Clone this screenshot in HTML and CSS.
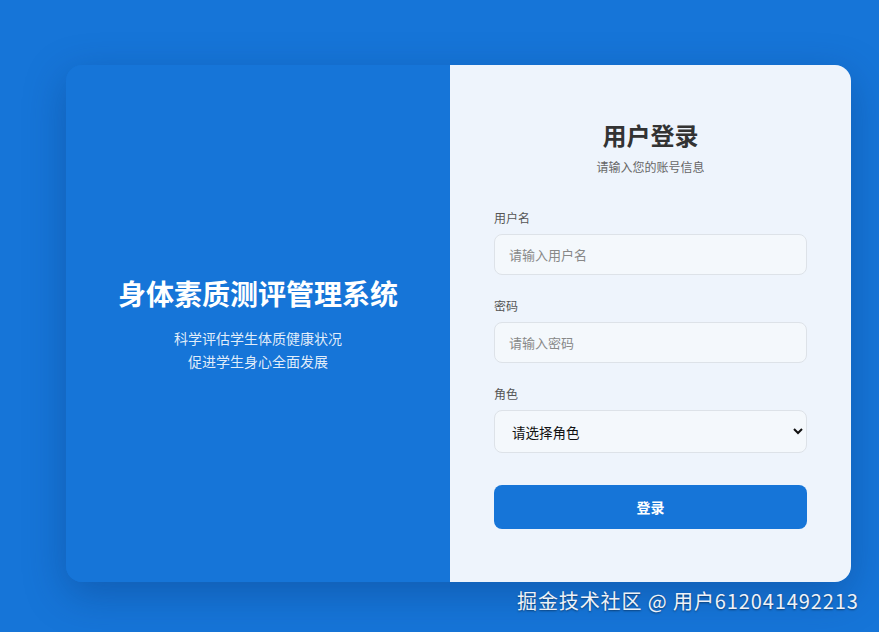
FILE: index.html
```html
<!DOCTYPE html>
<html lang="zh-CN">
<head>
    <meta charset="UTF-8">
    <meta name="viewport" content="width=device-width, initial-scale=1.0">
    <title>身体素质测评管理系统 - 登录</title>
    <link rel="stylesheet" href="styles.css">
</head>
<body>
    <div class="login-card">
        <!-- 左侧介绍 -->
        <div class="intro">
            <h1>身体素质测评管理系统</h1>
            <p>科学评估学生体质健康状况<br>促进学生身心全面发展</p>
        </div>

        <!-- 右侧表单 -->
        <div class="login-form">
            <h2>用户登录</h2>
            <p class="sub">请输入您的账号信息</p>

            <div class="form-group">
                <label for="username">用户名</label>
                <input type="text" id="username" placeholder="请输入用户名">
            </div>
            <div class="form-group">
                <label for="password">密码</label>
                <input type="password" id="password" placeholder="请输入密码">
            </div>
            <div class="form-group">
                <label for="role">角色</label>
                <select id="role">
                    <option value="">请选择角色</option>
                    <option value="student">学生</option>
                    <option value="teacher">教师</option>
                    <option value="admin">管理员</option>
                </select>
            </div>
            <button class="btn-login">登录</button>
        </div>
    </div>

    <div class="watermark">掘金技术社区 @ 用户612041492213</div>
</body>
</html>
```

FILE: styles.css
```css
* {
    box-sizing: border-box;
}
body {
    margin: 0;
    height: 632px;
    padding: 65px 28px 0 66px;
    font-family: "Noto Sans CJK SC", "Noto Sans", sans-serif;
    background: #1675d8;
    overflow: hidden;
}
.login-card {
    display: flex;
    width: 785px;
    height: 517px;
    border-radius: 16px;
    overflow: hidden;
    box-shadow: 0 12px 40px rgba(10, 50, 110, 0.35);
}
.intro {
    width: 384px;
    display: flex;
    flex-direction: column;
    justify-content: center;
    align-items: center;
    text-align: center;
    background: #1675d8;
    color: white;
}
.intro h1 {
    margin: 0 0 16px;
    font-size: 28px;
    line-height: 36px;
    font-weight: bold;
}
.intro p {
    margin: 0;
    font-size: 14px;
    line-height: 23px;
    color: rgba(255, 255, 255, 0.88);
}
.login-form {
    flex: 1;
    padding: 54px 44px 0;
    background: #eef4fc;
}
.login-form h2 {
    margin: 0;
    text-align: center;
    font-size: 24px;
    line-height: 32px;
    color: #333;
}
.login-form .sub {
    margin: 7px 0 33px;
    text-align: center;
    font-size: 12px;
    line-height: 18px;
    color: #666;
}
.form-group {
    margin-bottom: 22px;
}
.form-group label {
    display: block;
    margin-bottom: 7px;
    font-size: 12px;
    line-height: 18px;
    color: #555;
}
.form-group input,
.form-group select {
    display: block;
    width: 100%;
    height: 41px;
    padding: 0 14px;
    font-family: inherit;
    font-size: 13px;
    color: #222;
    background: #f4f8fc;
    border: 1px solid #dde2e8;
    border-radius: 8px;
    outline: none;
}
.form-group input::placeholder {
    color: #888;
}
.form-group select {
    height: 43px;
    padding: 0 13px;
    font-size: 13.5px;
    color: #111;
}
.btn-login {
    display: block;
    width: 100%;
    height: 44px;
    margin-top: 32px;
    font-family: inherit;
    font-size: 14px;
    font-weight: bold;
    color: white;
    background: #1675d8;
    border: none;
    border-radius: 8px;
    cursor: pointer;
}
.watermark {
    position: absolute;
    left: 517px;
    top: 587px;
    font-size: 20px;
    line-height: 28px;
    letter-spacing: 0.9px;
    color: #eef2f8;
    text-shadow: 0 1px 2px rgba(0, 0, 0, 0.45);
}
```
